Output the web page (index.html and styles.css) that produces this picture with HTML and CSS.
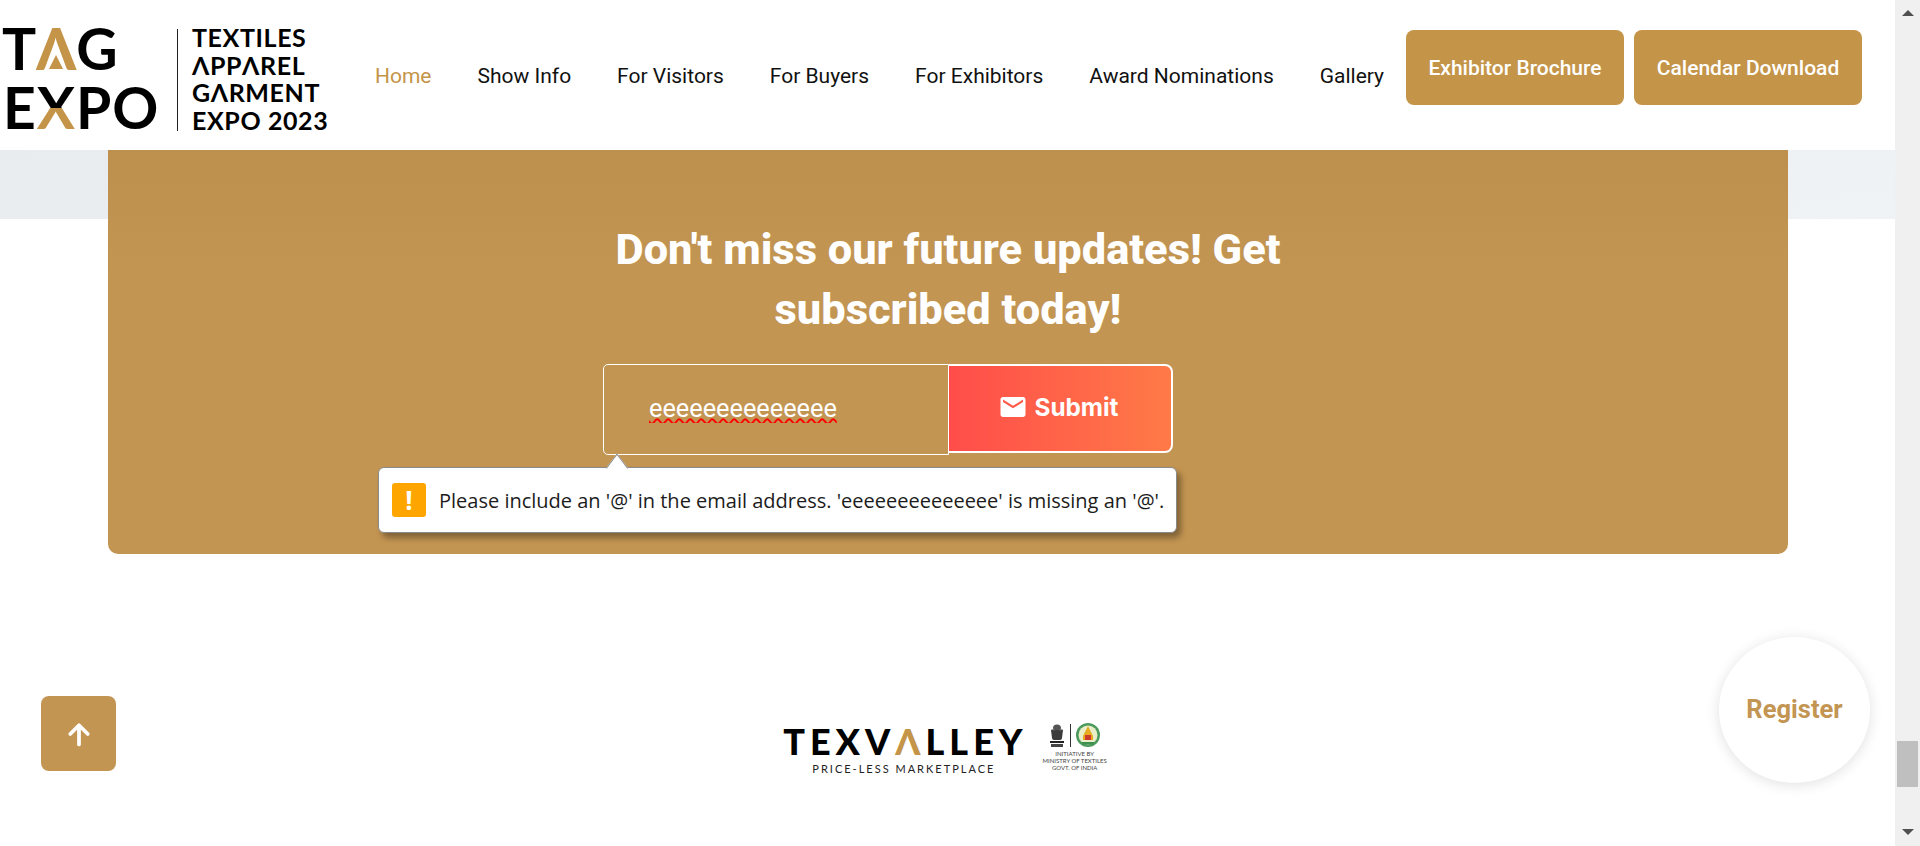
FILE: index.html
```html
<!DOCTYPE html>
<html>

<head>
  <meta charset="utf-8">
  <meta name="viewport" content="width=device-width">
  <title>TAG Expo 2023</title>
  <link rel="stylesheet" href="styles.css">
</head>

<body>
  <div class="page">
    <header class="site-header">
      <a class="logo" href="#">
        <div class="logo-mark">
          <div class="mark-line">T<span class="gold-a">Λ</span>G</div>
          <div class="mark-line mark-expo">E<span class="split-x">X</span>PO</div>
        </div>
        <div class="logo-name">
          <div>TEXTILES</div>
          <div>ΛPPΛREL</div>
          <div>GΛRMENT</div>
          <div>EXPO 2023</div>
        </div>
      </a>
      <nav class="main-nav">
        <a class="active" href="#">Home</a>
        <a href="#">Show Info</a>
        <a href="#">For Visitors</a>
        <a href="#">For Buyers</a>
        <a href="#">For Exhibitors</a>
        <a href="#">Award Nominations</a>
        <a href="#">Gallery</a>
      </nav>
      <div class="header-btns">
        <a class="gold-btn btn-brochure" href="#">Exhibitor Brochure</a>
        <a class="gold-btn btn-calendar" href="#">Calendar Download</a>
      </div>
    </header>

    <section class="newsletter">
      <div class="news-card">
        <h2>Don't miss our future updates! Get<br>subscribed today!</h2>
        <form class="sub-form">
          <input class="sub-input" type="text" value="eeeeeeeeeeeeee" spellcheck="false">
          <button class="sub-btn" type="button">
            <svg width="30" height="30" viewBox="0 0 24 24"><path fill="#fff" d="M20 4H4c-1.100 0-2 .9-2 2v12c0 1.100.9 2 2 2h16c1.100 0 2-.9 2-2V6c0-1.100-.9-2-2-2zm0 4l-8 5-8-5V6l8 5 8-5v2z"/></svg>
            Submit
          </button>
          <div class="bubble">
            <span class="bubble-icon">!</span>
            <span>Please include an '@' in the email address. 'eeeeeeeeeeeeee' is missing an '@'.</span>
          </div>
        </form>
      </div>
    </section>

    <footer class="site-footer">
      <div class="tex-brand">
        <div class="tex-name">TEXV<span class="tex-a">Λ</span>LLEY</div>
        <div class="tex-sub">PRICE-LESS MARKETPLACE</div>
      </div>
      <div class="ministry">
        <div class="emblems">
          <svg width="18" height="25" viewBox="0 0 18 25">
            <ellipse cx="9" cy="5" rx="4" ry="3.500" fill="#555"/>
            <path fill="#3c3c3c" d="M3 7c2-1 3 0 3 1l1-1h4l1 1c0-1 1-2 3-1l-1 8c0 1-1 2-2 2H6c-1 0-2-1-2-2z"/>
            <rect x="2" y="18" width="14" height="2" fill="#222"/>
            <rect x="3" y="21" width="12" height="3" fill="#444"/>
          </svg>
          <span class="emblem-line"></span>
          <svg width="26" height="26" viewBox="0 0 26 26">
            <circle cx="13" cy="13" r="12" fill="#4c9a5c"/>
            <circle cx="13" cy="13" r="9.500" fill="#e9edc8"/>
            <path fill="#e6ab1f" d="M13 4l5 10v4H8v-4z"/>
            <rect x="10" y="13" width="6" height="5" fill="#cc3a2e"/>
            <path fill="#3f8f4f" d="M6 20h14l-2 2.500H8z"/>
          </svg>
        </div>
        <div class="ministry-text">INITIATIVE BY<br>MINISTRY OF TEXTILES<br>GOVT. OF INDIA</div>
      </div>
    </footer>

    <a class="to-top" href="#">
      <svg width="28" height="28" viewBox="0 0 24 24"><path fill="none" stroke="#fff" stroke-width="3.200" stroke-linecap="round" stroke-linejoin="round" d="M12 21V5M4.500 12L12 4.500l7.500 7.500"/></svg>
    </a>
    <a class="register" href="#">Register</a>
  </div>

  <div class="scrollbar">
    <span class="arrow-up"></span>
    <span class="thumb"></span>
    <span class="arrow-down"></span>
  </div>
</body>
</html>
```

FILE: styles.css
```css
* {
  box-sizing: border-box;
}

html, body {
  height: 846px;
  margin: 0;
  overflow: hidden;
}

body {
  background: #fff;
  color: #111;
  display: flex;
  font-family: Roboto, sans-serif;
}

a {
  color: inherit;
  text-decoration: none;
}

.page {
  flex: 1;
  position: relative;
}

/* header */
.site-header {
  align-items: center;
  display: flex;
  height: 150px;
}

.logo {
  color: #000;
  display: flex;
  font-family: Lato, sans-serif;
  height: 150px;
  width: 375px;
}

.logo-mark {
  font-size: 57px;
  font-weight: 700;
  line-height: 59px;
  padding-left: 2px;
  padding-top: 19px;
  width: 177px;
}

.mark-line {
  height: 59px;
  white-space: nowrap;
}

.mark-expo {
  letter-spacing: 1px;
  margin-left: 1px;
}

.gold-a {
  color: #c49448;
  font-weight: 900;
  position: relative;
}

.gold-a::after {
  border-bottom: 14px solid #c49448;
  border-left: 7px solid transparent;
  border-right: 7px solid transparent;
  bottom: 13px;
  content: "";
  left: 50%;
  margin-left: -7px;
  position: absolute;
}

.split-x {
  background: linear-gradient(#000 52%, #c49448 52%);
  -webkit-background-clip: text;
  background-clip: text;
  color: transparent;
}

.logo-name {
  border-left: 1px solid #222;
  font-size: 25px;
  font-weight: 700;
  letter-spacing: 0.6px;
  height: 102px;
  line-height: 27.5px;
  margin-top: 29px;
  padding-left: 14px;
  white-space: nowrap;
}

.logo-name div:first-child {
  margin-top: -5px;
}

.main-nav {
  display: flex;
  font-size: 21px;
  gap: 46px;
  padding-top: 1px;
  width: 1031px;
}

.main-nav .active {
  color: #c49448;
}

.header-btns {
  display: flex;
  gap: 10px;
  margin-bottom: 15px;
}

.gold-btn {
  align-items: center;
  background: #c49448;
  border-radius: 8px;
  color: #fff;
  display: flex;
  font-size: 21px;
  font-weight: 500;
  height: 75px;
  justify-content: center;
}

.btn-brochure {
  width: 218px;
}

.btn-calendar {
  width: 228px;
}

/* newsletter */
.newsletter {
  background: linear-gradient(170deg, #e8ecef, #f0f3f6) top / 100% 69px no-repeat;
  padding: 0 107px 0 108px;
}

.news-card {
  background: linear-gradient(#bd904e, #c39552 120px);
  border-radius: 0 0 10px 10px;
  color: #fff;
  height: 404px;
  padding-top: 70px;
}

.news-card h2 {
  font-size: 43.4px;
  font-weight: 800;
  line-height: 60px;
  margin: 0 0 24px;
  text-align: center;
}

.sub-form {
  display: flex;
  margin-left: 495px;
  position: relative;
  width: 569px;
}

.sub-input {
  background: transparent;
  border: 1px solid #fff;
  border-radius: 5px 0 0 5px;
  color: #fff;
  font-family: Roboto, sans-serif;
  font-size: 25.3px;
  height: 91px;
  outline: 0;
  padding: 0 45px 3px;
  text-decoration: underline wavy #f00 1.5px;
  width: 346px;
}

.sub-btn {
  align-items: center;
  background: linear-gradient(90deg, #ff4d4a, #ff7a47);
  border: 2px solid #fff;
  border-left: 0;
  border-radius: 0 8px 8px 0;
  color: #fff;
  display: flex;
  flex: none;
  font-family: Inter, sans-serif;
  font-size: 24.3px;
  font-weight: 700;
  gap: 6px;
  height: 89px;
  justify-content: center;
  padding: 0 3px 3px 0;
  width: 224px;
}

.bubble {
  align-items: center;
  background: #fff;
  border: 1px solid #8a8a8a;
  border-radius: 6px;
  box-shadow: 4px 5px 6px rgba(0, 0, 0, 0.35);
  color: #1c1c1c;
  display: flex;
  font-family: "Open Sans", sans-serif;
  font-size: 20px;
  gap: 13px;
  height: 66px;
  left: -225px;
  padding-left: 13px;
  position: absolute;
  top: 103px;
  white-space: nowrap;
  width: 799px;
}

.bubble::before {
  background: #fff;
  border-left: 1px solid #8a8a8a;
  border-top: 1px solid #8a8a8a;
  content: "";
  height: 17px;
  left: 229px;
  position: absolute;
  top: -9px;
  transform: rotate(45deg) skew(8deg, 8deg);
  width: 17px;
}

.bubble-icon {
  align-items: center;
  background: #ffa500;
  border-radius: 3px;
  color: #fff;
  display: flex;
  flex: none;
  font-size: 26px;
  font-weight: 700;
  height: 34px;
  justify-content: center;
  width: 34px;
}

/* footer */
.site-footer {
  align-items: flex-start;
  display: flex;
  gap: 15px;
  justify-content: center;
  padding-right: 5px;
  padding-top: 172px;
}

.tex-brand {
  text-align: center;
}

.tex-name {
  color: #000;
  font-family: Lato, sans-serif;
  font-size: 36px;
  font-weight: 900;
  letter-spacing: 5px;
  line-height: 30px;
  white-space: nowrap;
}

.tex-a {
  color: #c49448;
}

.tex-sub {
  color: #222;
  font-family: Lato, sans-serif;
  font-size: 11px;
  letter-spacing: 2px;
  line-height: 14px;
  margin-top: 6px;
  padding-right: 3px;
}

.ministry {
  margin-top: -4px;
  text-align: center;
}

.emblems {
  align-items: center;
  display: flex;
  gap: 4px;
  justify-content: center;
}

.emblem-line {
  background: #333;
  height: 23px;
  width: 1px;
}

.ministry-text {
  color: #444;
  font-family: Lato, sans-serif;
  font-size: 6px;
  line-height: 7px;
  margin-top: 2px;
  white-space: nowrap;
}

/* floating buttons */
.to-top {
  align-items: center;
  background: #c39552;
  border-radius: 8px;
  display: flex;
  height: 75px;
  justify-content: center;
  left: 41px;
  position: absolute;
  top: 696px;
  width: 75px;
}

.register {
  align-items: center;
  background: #fff;
  border-radius: 50%;
  box-shadow: 0 2px 14px rgba(0, 0, 0, 0.12);
  color: #c39552;
  display: flex;
  font-size: 25.5px;
  font-weight: 700;
  height: 146px;
  justify-content: center;
  left: 1719px;
  padding-bottom: 2px;
  position: absolute;
  top: 637px;
  width: 151px;
}

/* scrollbar */
.scrollbar {
  align-items: center;
  background: #f0f0f0;
  display: flex;
  flex: none;
  flex-direction: column;
  height: 846px;
  width: 25px;
  padding-top: 10px;
  padding-bottom: 11px;
}

.arrow-up {
  border-bottom: 6px solid #505050;
  border-left: 6px solid transparent;
  border-right: 6px solid transparent;
}

.arrow-down {
  border-left: 6px solid transparent;
  border-right: 6px solid transparent;
  border-top: 6px solid #505050;
  margin-top: auto;
}

.thumb {
  background: #bfbfbf;
  height: 46px;
  margin-top: 725px;
  width: 21px;
}
```
